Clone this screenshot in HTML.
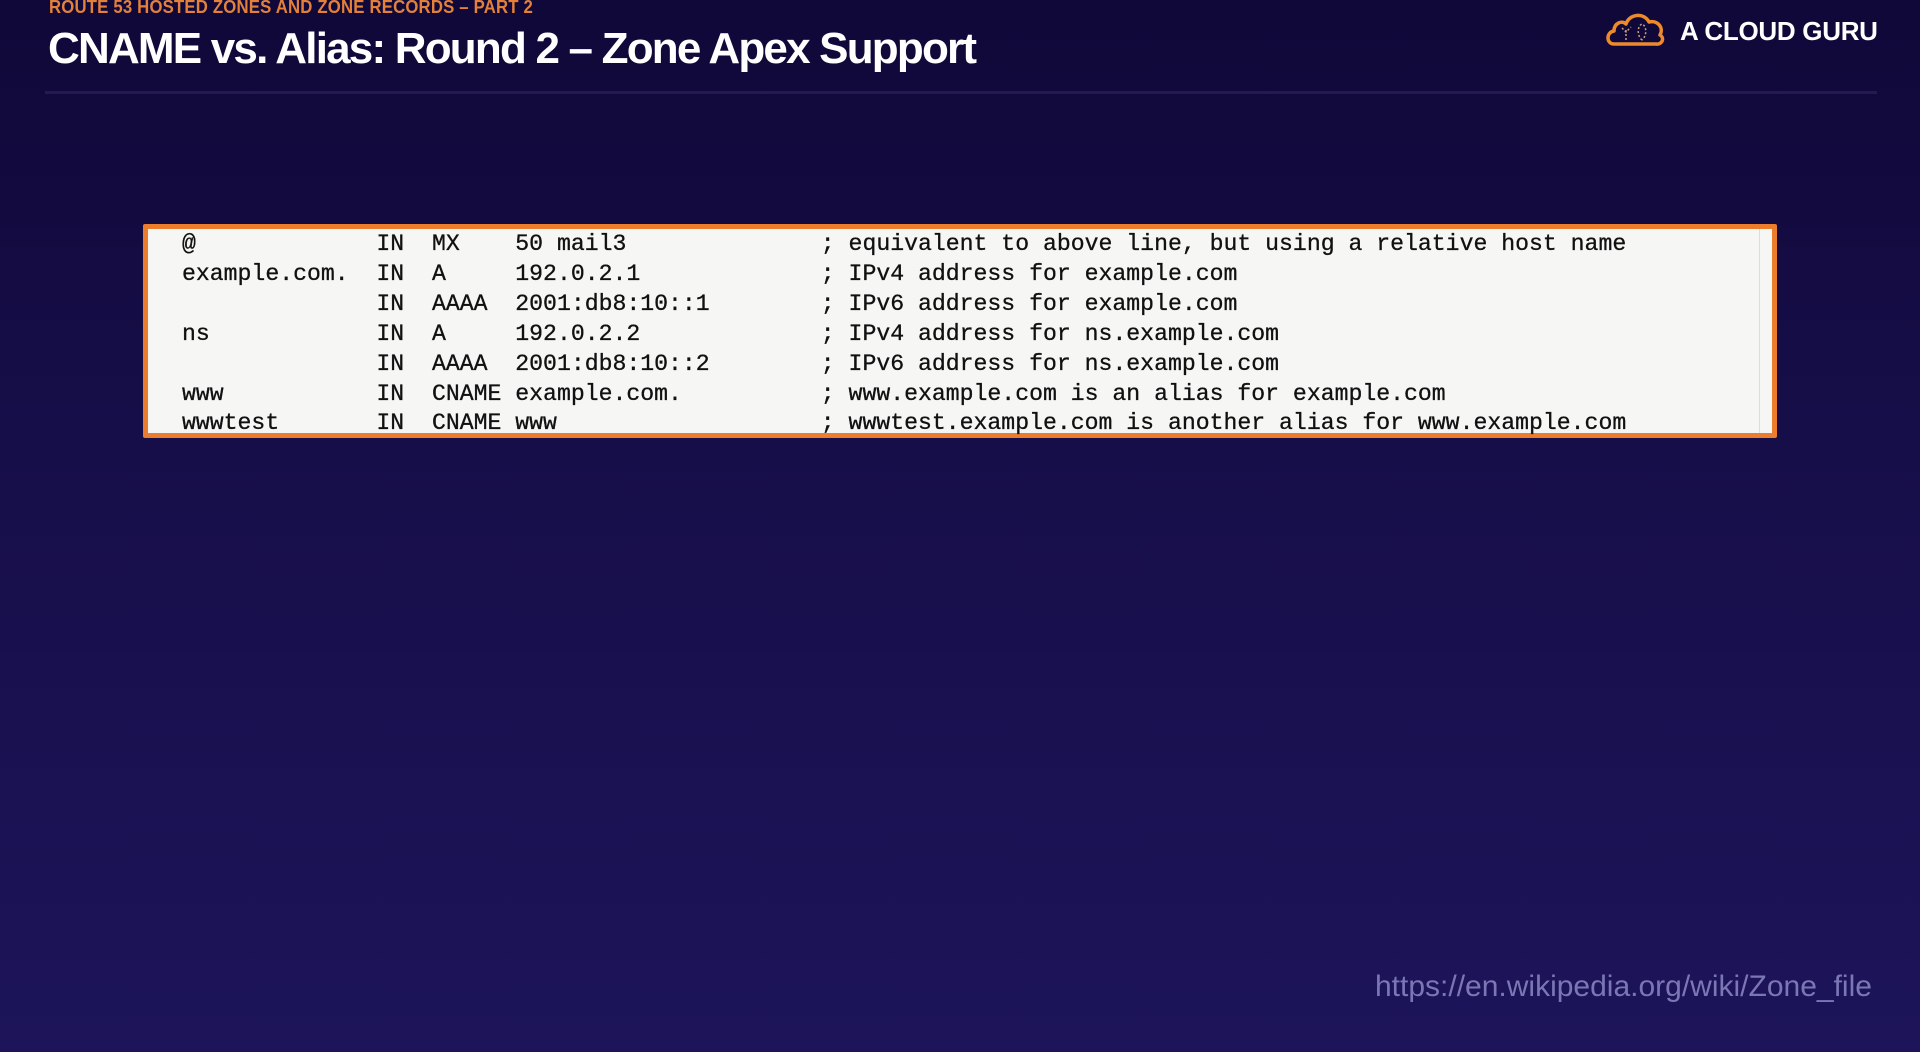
<!DOCTYPE html>
<html><head><meta charset="utf-8"><style>
html,body{margin:0;padding:0}
body{width:1920px;height:1052px;overflow:hidden;position:relative;background:linear-gradient(180deg,#100838 0%,#160e48 40%,#1d145a 100%);font-family:"Liberation Sans",sans-serif}
.sub{position:absolute;left:49px;top:-3px;font-size:18px;font-weight:bold;color:#e3803a;letter-spacing:0.2px;transform:scaleX(0.93);transform-origin:left}
.title{position:absolute;left:48px;top:24px;font-size:44px;font-weight:bold;color:#fff;letter-spacing:-1.8px;white-space:nowrap}
.rule{position:absolute;left:45px;top:91px;width:1832px;height:3px;background:#221a52}
.logo{position:absolute;left:1680px;top:16px;font-size:26px;font-weight:bold;color:#fff;letter-spacing:-0.3px}
.box{position:absolute;left:143px;top:224px;width:1624px;height:204px;border:5px solid #ec7d2c;background:#f6f6f4;border-radius:2px}
.box .vl{position:absolute;right:12px;top:0;bottom:0;width:1px;background:#ddd}
pre{margin:0;position:absolute;left:34px;top:1px;font-family:"Liberation Mono",monospace;font-size:23.15px;line-height:29.9px;color:#111;-webkit-text-stroke:0.3px #111}
.url{position:absolute;left:1375px;top:970px;font-size:30px;color:#7b77b4;white-space:nowrap}
</style></head><body>
<div class="sub">ROUTE 53 HOSTED ZONES AND ZONE RECORDS – PART 2</div>
<div class="title">CNAME vs. Alias: Round 2 – Zone Apex Support</div>
<div class="rule"></div>
<svg style="position:absolute;left:1604px;top:10px" width="64" height="38" viewBox="0 0 64 38"><path d="M10 34 C2 34 2 22 10 21 C10 13 18 10 22 14 C25 4 40 2 45 12 C54 10 60 18 56 25 C61 28 58 35 52 34 Z" fill="none" stroke="#ec8a2c" stroke-width="3.5" stroke-linejoin="round"/><path d="M22 30 L22 20 M18 18 L22 22 L27 17 M38 30 C33 26 33 16 38 14 C43 16 43 26 38 30" fill="none" stroke="#c9a07a" stroke-width="1.5" stroke-dasharray="2 2"/></svg>
<div class="logo">A CLOUD GURU</div>
<div class="box"><div class="vl"></div><pre>@             IN  MX    50 mail3              ; equivalent to above line, but using a relative host name
example.com.  IN  A     192.0.2.1             ; IPv4 address for example.com
              IN  AAAA  2001:db8:10::1        ; IPv6 address for example.com
ns            IN  A     192.0.2.2             ; IPv4 address for ns.example.com
              IN  AAAA  2001:db8:10::2        ; IPv6 address for ns.example.com
www           IN  CNAME example.com.          ; www.example.com is an alias for example.com
wwwtest       IN  CNAME www                   ; wwwtest.example.com is another alias for www.example.com</pre></div>
<div class="url">https://en.wikipedia.org/wiki/Zone_file</div>
</body></html>
